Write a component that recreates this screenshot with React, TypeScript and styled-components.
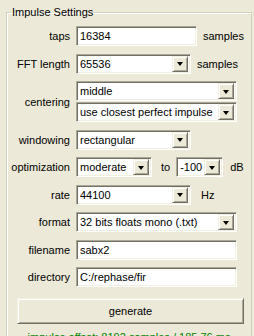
import React from 'react'
import styled, { createGlobalStyle } from 'styled-components'

const Colors = {
    face: '#ECE9D8',
    light: '#F1EFE2',
    highlight: '#FFFFFF',
    shadow: '#ACA899',
    darkShadow: '#716F64',
    etch: '#D0D0BF',
    text: '#000000',
    status: '#008000'
}

const GlobalStyle = createGlobalStyle`
    html, body {
        margin: 0;
        padding: 0;
        background: ${Colors.face};
        overflow: hidden;
    }

    body {
        font-family: "Liberation Sans", Arial, sans-serif;
        font-size: 11px;
        color: ${Colors.text};
    }
`

interface ComboProps {
    value: string
    width: number
}
const Combo: React.FC<ComboProps> = ({ value, width }) => {
    return (
        <ComboBox $width={width}>
            <ComboText>{value}</ComboText>
            <DropButton>
                <Arrow />
            </DropButton>
        </ComboBox>
    )
}

const App: React.FC = () => {
    return (
        <Page>
            <GlobalStyle />
            <GroupBox>
                <Legend>Impulse Settings</Legend>
                <Form>
                    <Row>
                        <Label>taps</Label>
                        <Controls>
                            <TextInput $width={121} defaultValue="16384" />
                            <Unit>samples</Unit>
                        </Controls>
                    </Row>
                    <Row>
                        <Label>FFT length</Label>
                        <Controls>
                            <Combo value="65536" width={115} />
                            <Unit>samples</Unit>
                        </Controls>
                    </Row>
                    <Row>
                        <Label>centering</Label>
                        <Stack>
                            <Combo value="middle" width={161} />
                            <Combo value="use closest perfect impulse" width={161} />
                        </Stack>
                    </Row>
                    <Row>
                        <Label>windowing</Label>
                        <Controls>
                            <Combo value="rectangular" width={115} />
                        </Controls>
                    </Row>
                    <Row>
                        <Label>optimization</Label>
                        <Controls>
                            <Combo value="moderate" width={76} />
                            <Unit $before={9} $after={6}>to</Unit>
                            <Combo value="-100" width={47} />
                            <Unit $before={7}>dB</Unit>
                        </Controls>
                    </Row>
                    <Row>
                        <Label>rate</Label>
                        <Controls>
                            <Combo value="44100" width={115} />
                            <Unit $before={10}>Hz</Unit>
                        </Controls>
                    </Row>
                    <Row>
                        <Label>format</Label>
                        <Controls>
                            <Combo value="32 bits floats mono (.txt)" width={161} />
                        </Controls>
                    </Row>
                    <Row>
                        <Label>filename</Label>
                        <Controls>
                            <TextInput $width={161} defaultValue="sabx2" />
                        </Controls>
                    </Row>
                    <Row>
                        <Label>directory</Label>
                        <Controls>
                            <TextInput $width={161} defaultValue="C:/rephase/fir" />
                        </Controls>
                    </Row>
                </Form>
                <GenerateButton>generate</GenerateButton>
                <Status>impulse offset: 8192 samples / 185.76 ms</Status>
            </GroupBox>
        </Page>
    )
}

export default App

const Page = styled.div`
    padding: 6px 2px 0 6px;
    height: 336px;
    box-sizing: border-box;
`

const GroupBox = styled.fieldset`
    margin: 0;
    padding: 0 0 20px 0;
    border: 1px solid ${Colors.etch};
    box-shadow: inset 1px 1px 0 ${Colors.highlight};
    min-width: 0;
`

const Legend = styled.legend`
    margin-left: 4px;
    padding: 0 1px;
    line-height: 13px;
`

const Form = styled.div`
    display: flex;
    flex-direction: column;
    gap: 7.5px;
    padding-top: 7px;
`

const Row = styled.div`
    display: grid;
    grid-template-columns: 63px 1fr;
    column-gap: 6px;
    align-items: center;
`

const Label = styled.span`
    text-align: right;
    white-space: nowrap;
`

const Controls = styled.div`
    display: flex;
    align-items: center;
`

const Stack = styled.div`
    display: flex;
    flex-direction: column;
    gap: 1px;
`

const Unit = styled.span<{ $before?: number; $after?: number }>`
    margin-left: ${({ $before }) => $before ?? 6}px;
    margin-right: ${({ $after }) => $after ?? 0}px;
    white-space: nowrap;
`

const sunken = `
    border: 1px solid;
    border-color: ${Colors.shadow} ${Colors.highlight} ${Colors.highlight} ${Colors.shadow};
    box-shadow: inset 1px 1px 0 ${Colors.darkShadow}, inset -1px -1px 0 ${Colors.light};
`

const TextInput = styled.input<{ $width: number }>`
    ${sunken}
    width: ${({ $width }) => $width}px;
    height: 20px;
    box-sizing: border-box;
    padding: 0 0 0 3px;
    margin: 0;
    background: #fff;
    font: inherit;
    color: ${Colors.text};
    outline: none;
`

const ComboBox = styled.div<{ $width: number }>`
    ${sunken}
    width: ${({ $width }) => $width}px;
    height: 20px;
    box-sizing: border-box;
    padding: 2px;
    background: #fff;
    display: flex;
    align-items: center;
`

const ComboText = styled.span`
    flex: 1;
    padding-left: 1px;
    white-space: nowrap;
    overflow: hidden;
`

const DropButton = styled.span`
    width: 16px;
    height: 16px;
    box-sizing: border-box;
    flex-shrink: 0;
    background: ${Colors.face};
    border: 1px solid;
    border-color: ${Colors.light} ${Colors.darkShadow} ${Colors.darkShadow} ${Colors.light};
    box-shadow: inset 1px 1px 0 ${Colors.highlight}, inset -1px -1px 0 ${Colors.shadow};
    display: flex;
    align-items: center;
    justify-content: center;
`

const Arrow = styled.span`
    width: 0;
    height: 0;
    border-left: 3.5px solid transparent;
    border-right: 3.5px solid transparent;
    border-top: 4px solid #000;
    margin-top: 1px;
`

const GenerateButton = styled.button`
    display: block;
    width: 227px;
    height: 26px;
    margin: 11px 0 0 10px;
    padding: 0;
    background: ${Colors.face};
    border: 1px solid;
    border-color: ${Colors.light} ${Colors.darkShadow} ${Colors.darkShadow} ${Colors.light};
    box-shadow: inset 1px 1px 0 ${Colors.highlight}, inset -1px -1px 0 ${Colors.shadow};
    font: inherit;
    color: ${Colors.text};
`

const Status = styled.div`
    margin-top: 7px;
    text-align: center;
    color: ${Colors.status};
    white-space: nowrap;
`
